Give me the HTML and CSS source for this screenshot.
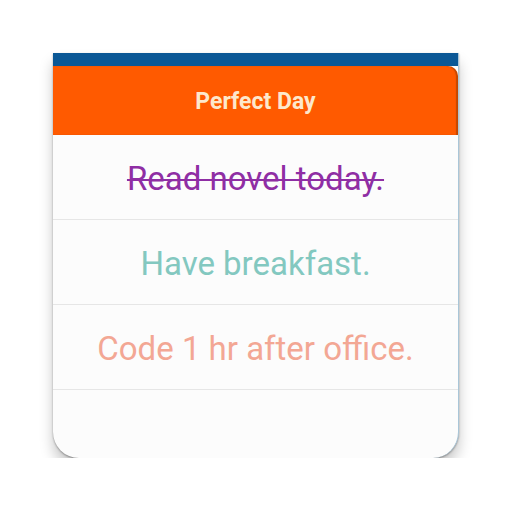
FILE: index.html
```html
<!DOCTYPE html>
<html>
<head>
<meta charset="utf-8">
<link rel="stylesheet" href="styles.css">
</head>
<body>
<div class="stage">
  <div class="card">
    <div class="statusbar"></div>
    <div class="header"><span class="txt">Perfect Day</span></div>
    <div class="row done"><span class="txt">Read novel today.</span></div>
    <div class="row teal"><span class="txt">Have breakfast.</span></div>
    <div class="row salmon"><span class="txt">Code 1 hr after office.</span></div>
    <div class="footer"></div>
  </div>
</div>
</body>
</html>
```
FILE: styles.css
```css
html, body {
  margin: 0;
  padding: 0;
  background: #ffffff;
}
.stage {
  padding: 53px 0 0 53px;
}
.card {
  width: 405px;
  background: #fcfcfc;
  border-radius: 0 0 26px 26px;
  box-shadow: 0 10px 14px rgba(0,0,0,0.22), 0 1px 2px rgba(0,0,0,0.35);
  overflow: hidden;
  border-right: 1px solid #a9c6d8;
  font-family: Roboto, "Noto Sans", sans-serif;
}
.statusbar {
  height: 13px;
  background: #0b5896;
}
.header {
  height: 67px;
  padding-top: 2px;
  background: #ff5a00;
  border-top-right-radius: 10px;
  box-shadow: inset -2px 0 1px rgba(90,40,0,0.35);
  color: #fde8cc;
  font-weight: 700;
  font-size: 23px;
  display: flex;
  align-items: center;
  justify-content: center;
}
.row {
  height: 82px;
  padding-top: 2px;
  border-bottom: 1px solid #e6e6e6;
  display: flex;
  align-items: center;
  justify-content: center;
  font-size: 33px;
  background: #fcfcfc;
}
.done {
  color: #8f2ea4;
}
.done .txt {
  text-decoration: line-through;
  text-decoration-thickness: 2px;
}
.teal {
  color: #83c8c0;
}
.salmon {
  color: #f3a794;
}
.footer {
  height: 68px;
}
```
